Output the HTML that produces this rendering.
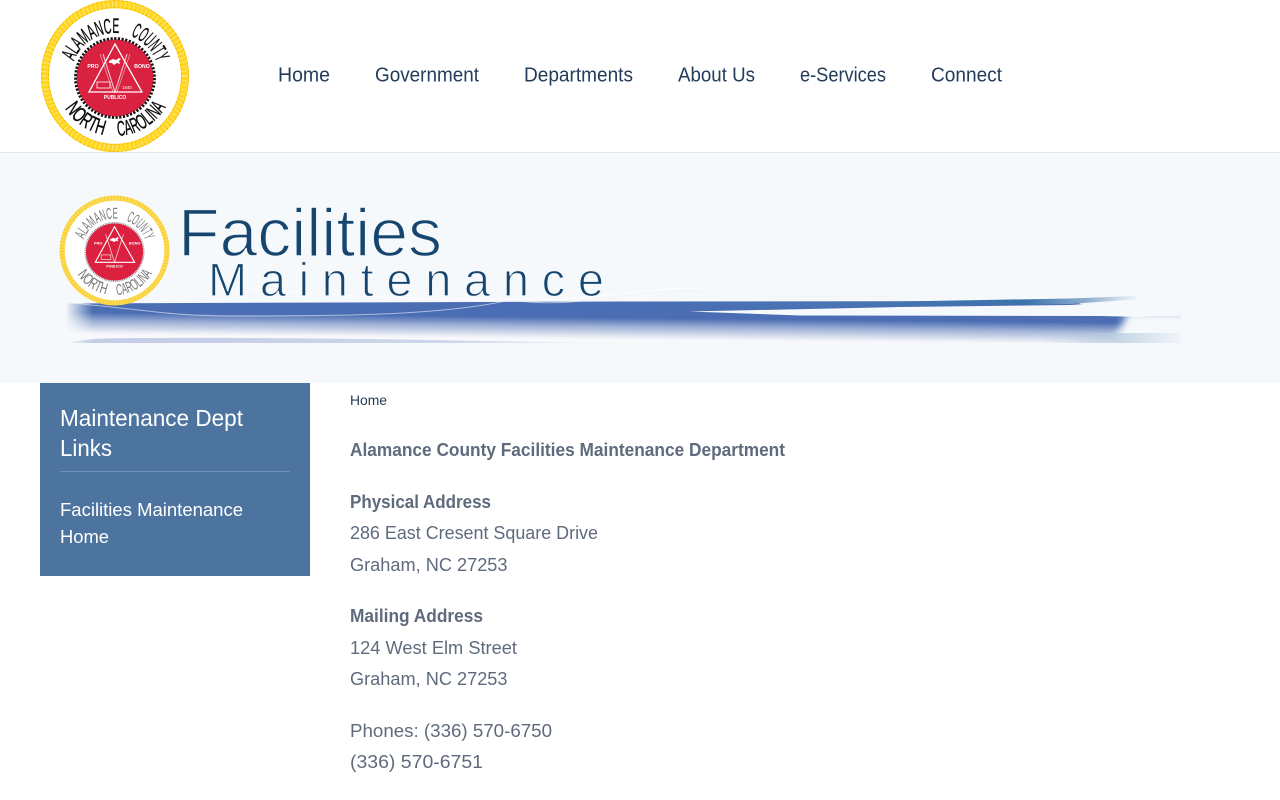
<!DOCTYPE html>
<html lang="en">
<head>
<meta charset="utf-8">
<title>Facilities Maintenance</title>
<style>
html,body{margin:0;padding:0;background:#fff;width:1280px;height:800px;overflow:hidden}
svg{position:absolute;left:0;top:0;display:block}
text{font-family:"Liberation Sans",sans-serif}
.nav text{font-size:20px;fill:#233c5a}
.body text{font-size:18px;fill:#5f6b7d}
.body .b{font-weight:700}
.nar{font-family:"Liberation Sans Narrow","Liberation Sans",sans-serif}
</style>
</head>
<body>
<svg width="1280" height="800" viewBox="0 0 1280 800" xmlns="http://www.w3.org/2000/svg">
<defs>
<linearGradient id="vfade" gradientUnits="userSpaceOnUse" x1="100" y1="305" x2="99.700" y2="335">
<stop offset=".25" stop-color="#4a6db3"/><stop offset=".55" stop-color="#9fb1d6"/><stop offset=".93" stop-color="#f0f2f8"/><stop offset="1" stop-color="#f8f9fc"/>
</linearGradient>
<linearGradient id="lfade" x1="0" y1="0" x2="1" y2="0">
<stop offset="0" stop-color="#f6f9fc"/><stop offset=".5" stop-color="#f6f9fc"/><stop offset="1" stop-color="#f6f9fc" stop-opacity="0"/>
</linearGradient>
<linearGradient id="strip" x1="0" y1="0" x2="1" y2="0">
<stop offset="0" stop-color="#c3cde5"/><stop offset=".7" stop-color="#ccd5e9"/><stop offset="1" stop-color="#f4f6fb"/>
</linearGradient>
<linearGradient id="upper" x1="0" y1="0" x2="1" y2="0">
<stop offset="0" stop-color="#4a6db3"/><stop offset=".4" stop-color="#4a74b3"/><stop offset=".78" stop-color="#3c73ab"/><stop offset=".9" stop-color="#8fb0cf"/><stop offset="1" stop-color="#f6f9fc"/>
</linearGradient>
<linearGradient id="tip" x1="0" y1="0" x2="1" y2="0">
<stop offset="0" stop-color="#b6cbe0" stop-opacity="0"/><stop offset=".55" stop-color="#b4cade"/><stop offset="1" stop-color="#eef3f8"/>
</linearGradient>
<filter id="soft" x="-30%" y="-30%" width="160%" height="160%"><feGaussianBlur stdDeviation="4"/></filter>
<path id="a1" d="M73.900 61.200A44 44 0 0 1 143.300 43.300"/>
<path id="a2" d="M130.800 35.900A44 44 0 0 1 156.300 92"/>
<path id="a3" d="M65 108.300A59 59 0 0 0 144.500 128.100"/>
<path id="a4" d="M118 135.900A59 59 0 0 0 174 77"/>
</defs>

<rect width="1280" height="800" fill="#fff"/>

<!-- main logo -->
<g transform="translate(0 -2) scale(1 1.027)">
<circle cx="115" cy="76" r="70" fill="#fff" stroke="#ffd51f" stroke-width="8"/>
<circle cx="115" cy="76" r="70" fill="none" stroke="#fff3a8" stroke-width="6" stroke-dasharray="1 3.300" opacity=".65"/>
<circle cx="115" cy="76" r="73.500" fill="none" stroke="#f0b800" stroke-width=".9" stroke-dasharray="2 2.300"/>
<circle cx="115" cy="76" r="66.500" fill="none" stroke="#f0b800" stroke-width=".9" stroke-dasharray="2 2.100"/>
</g>
<circle cx="115" cy="78" r="38.500" fill="#d92140"/>
<circle cx="115" cy="78" r="39.500" fill="none" stroke="#111" stroke-width="2.800" stroke-dasharray="2.200 1.500"/>
<g fill="#0c0c0c" stroke="#0c0c0c" stroke-width=".35" font-size="21">
<text class="nar"><textPath href="#a1" textLength="57" lengthAdjust="spacingAndGlyphs">ALAMANCE</textPath></text>
<text class="nar"><textPath href="#a2" textLength="38" lengthAdjust="spacingAndGlyphs">COUNTY</textPath></text>
<text class="nar"><textPath href="#a3" textLength="48" lengthAdjust="spacingAndGlyphs">NORTH</textPath></text>
<text class="nar"><textPath href="#a4" textLength="58" lengthAdjust="spacingAndGlyphs">CAROLINA</textPath></text>
</g>
<g fill="none" stroke="#fff">
<path d="M115 44L89 92H142Z" stroke-width="1.300"/>
<path d="M103 54L115 92L127 54" stroke-width="1.100" opacity=".75"/>
<path d="M100 54L113 92M130 54L117 92" stroke-width=".7" opacity=".6"/>
<rect x="97" y="82" width="13" height="6" stroke-width=".8"/>
</g>
<path d="M109 61l4-2 3 1 3-2 2 1-2 2 1 3-3-1-3 2-2-2-3 0z" fill="#fff"/>
<g fill="#fff" font-weight="700" text-anchor="middle">
<text x="93" y="68" font-size="5.200">PRO</text>
<text x="142" y="68" font-size="5.200">BONO</text>
<text x="115" y="99" font-size="5">PUBLICO</text>
<text x="127" y="89" font-size="4.400" font-weight="400">1840</text>
</g>

<!-- nav -->
<g class="nav">
<text x="278" y="81.500" textLength="52" lengthAdjust="spacingAndGlyphs">Home</text>
<text x="375" y="81.500" textLength="104" lengthAdjust="spacingAndGlyphs">Government</text>
<text x="524" y="81.500" textLength="109" lengthAdjust="spacingAndGlyphs">Departments</text>
<text x="678" y="81.500" textLength="77" lengthAdjust="spacingAndGlyphs">About Us</text>
<text x="800" y="81.500" textLength="86" lengthAdjust="spacingAndGlyphs">e-Services</text>
<text x="931" y="81.500" textLength="71" lengthAdjust="spacingAndGlyphs">Connect</text>
</g>

<!-- banner -->
<rect x="0" y="152" width="1280" height="1" fill="#e4e7ea"/>
<rect x="0" y="153" width="1280" height="230" fill="#f6f9fc"/>

<!-- wave band -->
<rect x="40" y="304" width="1090" height="39" fill="#f8f9fc"/>
<path d="M60 303.500L620 301.500L1070 301L1125 316L1181 316V343H60Z" fill="url(#vfade)"/>
<path d="M689 311.500L900 307L1070 305L1145 300L1145 317L1100 316L800 315.500Z" fill="#f6f9fc"/>
<path d="M620 301.500L900 301.500L1070 298.500L1135 296L1140 299L1070 304L900 306L689 311L620 311Z" fill="url(#upper)"/>
<path d="M70 343C80 339 100 338 150 338C300 337 500 341 600 343Z" fill="url(#strip)"/>
<path d="M1128 312L1200 312L1200 350L1110 350Z" fill="#f6f9fc" filter="url(#soft)"/>
<rect x="1040" y="333" width="141" height="10" fill="url(#tip)" opacity=".75"/>
<rect x="38" y="298" width="55" height="46" fill="url(#lfade)"/>
<path d="M70 303C150 310 170 316 230 316C330 316 440 316 510 300C580 310 620 290 690 291C760 300 880 297 1100 291" fill="none" stroke="#eef2f9" stroke-width="1" opacity=".6"/>
<path d="M240 288C340 296 420 300 500 299C600 302 640 288 700 288" fill="none" stroke="#fff" stroke-width="1" opacity=".7"/>

<!-- banner logo -->
<g transform="translate(29.100 194) scale(.743)">
<circle cx="115" cy="76" r="70.500" fill="#fff" stroke="#fbdb55" stroke-width="7"/>
<circle cx="115" cy="76" r="70.500" fill="none" stroke="#f2c218" stroke-width="7" stroke-dasharray="1.100 3.200" opacity=".7"/>
<circle cx="115" cy="78" r="38.500" fill="#db213f"/>
<circle cx="115" cy="78" r="39.500" fill="none" stroke="#999" stroke-width="1.800" stroke-dasharray="1.500 1"/>
<g fill="#777" font-size="21">
<text class="nar"><textPath href="#a1" textLength="57" lengthAdjust="spacingAndGlyphs">ALAMANCE</textPath></text>
<text class="nar"><textPath href="#a2" textLength="38" lengthAdjust="spacingAndGlyphs">COUNTY</textPath></text>
<text class="nar"><textPath href="#a3" textLength="48" lengthAdjust="spacingAndGlyphs">NORTH</textPath></text>
<text class="nar"><textPath href="#a4" textLength="58" lengthAdjust="spacingAndGlyphs">CAROLINA</textPath></text>
</g>
<g fill="none" stroke="#fff">
<path d="M115 44L89 92H142Z" stroke-width="1.500"/>
<path d="M103 54L115 92L127 54" stroke-width="1.100" opacity=".75"/>
<rect x="97" y="82" width="13" height="6" stroke-width=".8"/>
</g>
<path d="M109 61l4-2 3 1 3-2 2 1-2 2 1 3-3-1-3 2-2-2-3 0z" fill="#fff"/>
<g fill="#fff" font-weight="700" text-anchor="middle">
<text x="93" y="68" font-size="5.200">PRO</text>
<text x="142" y="68" font-size="5.200">BONO</text>
<text x="115" y="99" font-size="5">PUBLICO</text>
</g>
</g>

<text x="178" y="256" font-size="68" fill="#16466f" stroke="#f6f9fc" stroke-width="1.500" textLength="264" lengthAdjust="spacing">Facilities</text>
<text x="208" y="296" font-size="47" fill="#16466f" stroke="#f6f9fc" stroke-width="1.200" textLength="396" lengthAdjust="spacing">Maintenance</text>

<!-- sidebar -->
<rect x="40" y="383" width="270" height="193" fill="#4c749f"/>
<text x="60" y="426" font-size="23" fill="#fff" textLength="183" lengthAdjust="spacingAndGlyphs">Maintenance Dept</text>
<text x="60" y="456" font-size="23" fill="#fff" textLength="52" lengthAdjust="spacingAndGlyphs">Links</text>
<rect x="60" y="471" width="230" height="1" fill="#6f8fb2"/>
<text x="60" y="516" font-size="18.500" fill="#fff" textLength="183" lengthAdjust="spacingAndGlyphs">Facilities Maintenance</text>
<text x="60" y="543" font-size="18.500" fill="#fff" textLength="49" lengthAdjust="spacingAndGlyphs">Home</text>

<!-- content -->
<text x="350" y="405" font-size="14" fill="#233c5a" textLength="37" lengthAdjust="spacingAndGlyphs">Home</text>
<g class="body">
<text class="b" x="350" y="456" textLength="435" lengthAdjust="spacingAndGlyphs">Alamance County Facilities Maintenance Department</text>
<text class="b" x="350" y="508" textLength="141" lengthAdjust="spacingAndGlyphs">Physical Address</text>
<text x="350" y="539" textLength="248" lengthAdjust="spacingAndGlyphs">286 East Cresent Square Drive</text>
<text x="350" y="571" textLength="157.500" lengthAdjust="spacingAndGlyphs">Graham, NC 27253</text>
<text class="b" x="350" y="622" textLength="133" lengthAdjust="spacingAndGlyphs">Mailing Address</text>
<text x="350" y="654" textLength="167" lengthAdjust="spacingAndGlyphs">124 West Elm Street</text>
<text x="350" y="685" textLength="157.500" lengthAdjust="spacingAndGlyphs">Graham, NC 27253</text>
<text x="350" y="737" textLength="202" lengthAdjust="spacingAndGlyphs">Phones: (336) 570-6750</text>
<text x="350" y="768" textLength="133" lengthAdjust="spacingAndGlyphs">(336) 570-6751</text>
</g>
</svg>
</body>
</html>
